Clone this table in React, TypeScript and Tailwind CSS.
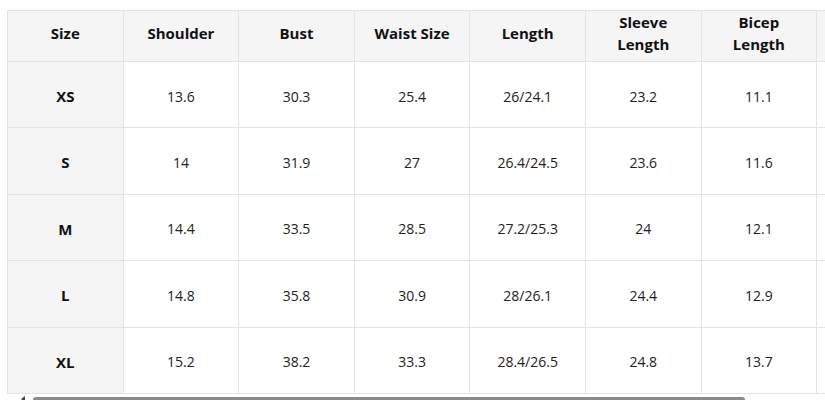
const headers = ["Size", "Shoulder", "Bust", "Waist Size", "Length", "Sleeve Length", "Bicep Length", ""];

const rows: string[][] = [
  ["XS", "13.6", "30.3", "25.4", "26/24.1", "23.2", "11.1", ""],
  ["S", "14", "31.9", "27", "26.4/24.5", "23.6", "11.6", ""],
  ["M", "14.4", "33.5", "28.5", "27.2/25.3", "24", "12.1", ""],
  ["L", "14.8", "35.8", "30.9", "28/26.1", "24.4", "12.9", ""],
  ["XL", "15.2", "38.2", "33.3", "28.4/26.5", "24.8", "13.7", ""],
];

export default function App() {
  return (
    <div className="w-[825px] h-[400px] overflow-hidden bg-white" style={{ fontFamily: '"Open Sans", "Noto Sans", sans-serif' }}>
      <div className="ml-[7px] mt-[10px] overflow-hidden">
        <table className="table-fixed border-collapse w-[905px] text-[14px] text-[#222]">
          <colgroup>
            {headers.map((_, i) => (
              <col key={i} className={i < 7 ? "w-[115.6px]" : "w-[96px]"} />
            ))}
          </colgroup>
          <thead>
            <tr className="h-[50px] bg-[#f5f5f5]">
              {headers.map((h, i) => (
                <th
                  key={i}
                  className="border border-[#e3e3e3] px-2 pb-[6px] text-center font-bold text-[15px] leading-[22px] text-[#111]"
                >
                  {h === "Sleeve Length" ? (
                    <>Sleeve<br />Length</>
                  ) : h === "Bicep Length" ? (
                    <>Bicep<br />Length</>
                  ) : (
                    h
                  )}
                </th>
              ))}
            </tr>
          </thead>
          <tbody>
            {rows.map((row) => (
              <tr key={row[0]} className="h-[66.4px]">
                {row.map((cell, i) => (
                  <td
                    key={i}
                    className={
                      i === 0
                        ? "border border-[#e3e3e3] bg-[#f5f5f5] pt-[3px] text-center font-bold text-[15px] text-[#111]"
                        : "border border-[#e3e3e3] pt-[3px] text-center"
                    }
                  >
                    {cell}
                  </td>
                ))}
              </tr>
            ))}
          </tbody>
        </table>
        {/* scrollbar */}
        <div className="flex items-end h-[7px] pl-[13px]">
          <div className="w-0 h-0 border-l-[3px] border-r-[3px] border-b-[4px] border-l-transparent border-r-transparent border-b-[#444] -rotate-90" />
          <div className="ml-[7px] w-[712px] h-[4px] rounded-t-[3px] bg-[#8a8a8a]" />
        </div>
      </div>
    </div>
  );
}
